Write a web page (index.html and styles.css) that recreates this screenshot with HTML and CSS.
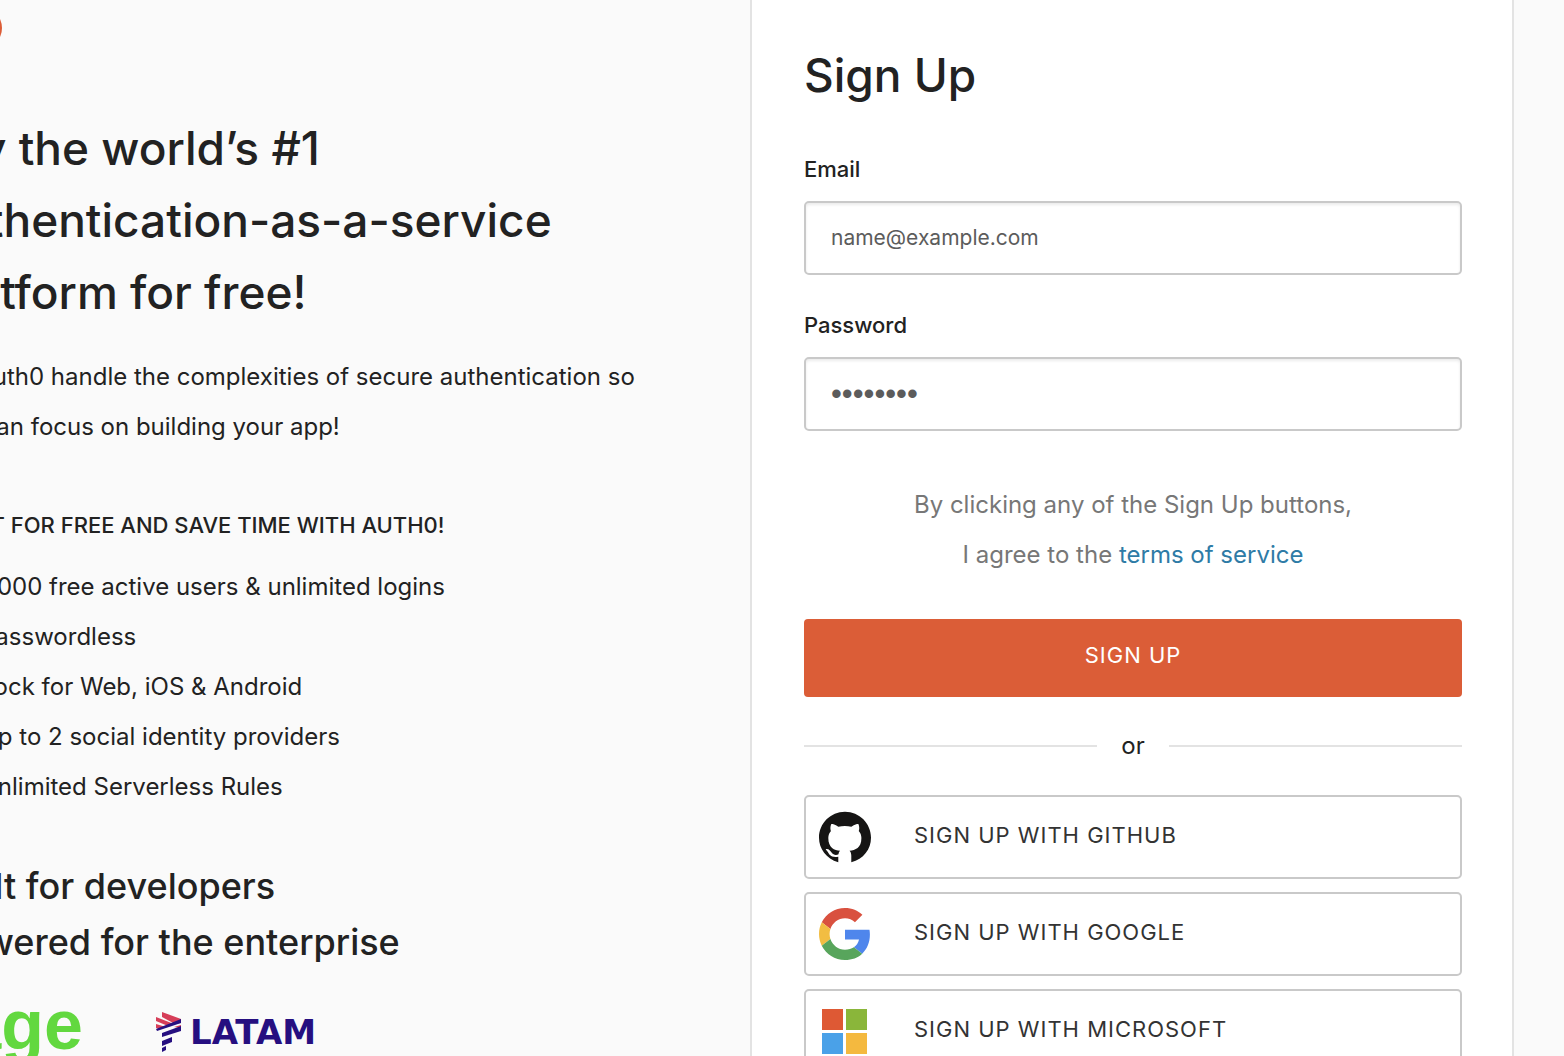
FILE: index.html
```html
<!DOCTYPE html>
<html lang="en">
<head>
  <meta charset="utf-8">
  <meta name="viewport" content="width=device-width, initial-scale=1">
  <title>Sign Up - Auth0</title>
  <link rel="stylesheet" href="styles.css">
</head>
<body>
  <div class="page">
    <main class="intro">
      <header class="brand">
        <svg class="brand-mark" viewBox="0 0 42 42" aria-hidden="true"><circle cx="21" cy="21" r="21" fill="#dc5c36"/></svg>
      </header>
      <h1 class="headline">Try the world’s #1<br>authentication-as-a-service<br>platform for free!</h1>
      <p class="lead">Let Auth0 handle the complexities of secure authentication so<br>you can focus on building your app!</p>
      <h2 class="overline">START FOR FREE AND SAVE TIME WITH AUTH0!</h2>
      <ul class="features">
        <li>7,000 free active users &amp; unlimited logins</li>
        <li>Passwordless</li>
        <li>Lock for Web, iOS &amp; Android</li>
        <li>Up to 2 social identity providers</li>
        <li>Unlimited Serverless Rules</li>
      </ul>
      <h2 class="tagline">Built for developers<br>Powered for the enterprise</h2>
      <div class="customers">
        <svg class="logo-sage" viewBox="0 0 144 60" role="img" aria-label="Sage">
          <text class="sage-word" x="149" y="42" text-anchor="end">sage</text>
        </svg>
        <svg class="logo-latam" viewBox="0 0 170 44" role="img" aria-label="LATAM">
          <g fill="#d63e58">
            <path d="M6 0 25 7V11L19 12 6 5Z"/>
            <path d="M0 5 18 12 12 14 0 9Z"/>
            <path d="M0 12 10 15 4 17 0 16Z"/>
            <path d="M18 15 25 13V16Z"/>
          </g>
          <g fill="#260f80">
            <path d="M0 17 25 7V11L1 19Z"/>
            <path d="M6 21 25 14V19L6 25Z"/>
            <path d="M6 29 16 25V30L6 34Z"/>
            <path d="M6 36 10 34V38L6 40Z"/>
          </g>
          <text class="latam-word" x="34" y="32">LATAM</text>
        </svg>
      </div>
    </main>

    <section class="panel" aria-labelledby="signup-title">
      <h2 class="panel-title" id="signup-title">Sign Up</h2>
      <form class="form">
        <div class="field">
          <label for="email">Email</label>
          <input id="email" type="email" placeholder="name@example.com">
        </div>
        <div class="field">
          <label for="password">Password</label>
          <input id="password" class="password" type="password" placeholder="••••••••">
        </div>
        <p class="terms">By clicking any of the Sign Up buttons,<br>I agree to the <a href="#terms">terms of service</a></p>
        <button class="submit" type="submit">SIGN UP</button>
      </form>
      <div class="divider"><span>or</span></div>
      <div class="social">
        <button class="social-button" type="button">
          <svg class="social-icon" viewBox="0 0 24 24" aria-hidden="true"><path fill="#161514" d="M12 .297c-6.63 0-12 5.373-12 12 0 5 3.3 9.6 8.9 11.4V21.1c-3.6.6-4.3-1.3-4.9-2.3-.3-.5-.9-1-.9-1.25 1.4-.35 2.1.8 2.6 1.5 1 1.5 2.4 1.35 3.3.95.108-.776.417-1.305.76-1.605-2.665-.3-5.466-1.332-5.466-5.93 0-1.31.465-2.38 1.235-3.22-.135-.303-.54-1.523.105-3.176 0 0 1.005-.322 3.3 1.23.96-.267 1.98-.399 3-.405 1.02.006 2.04.138 3 .405 2.28-1.552 3.285-1.23 3.285-1.23.645 1.653.24 2.873.12 3.176.765.84 1.23 1.91 1.23 3.22 0 4.61-2.805 5.625-5.475 5.92.42.36.81 1.096.81 2.22V23.7C20.565 22.092 24 17.592 24 12.297c0-6.627-5.373-12-12-12"/></svg>
          <span>SIGN UP WITH GITHUB</span>
        </button>
        <button class="social-button" type="button">
          <svg class="social-icon" viewBox="0 0 48 48" aria-hidden="true">
            <path fill="#d9513f" d="M24 9.5c3.54 0 6.71 1.22 9.21 3.6l6.85-6.85C35.9 2.38 30.47 0 24 0 14.62 0 6.51 5.38 2.56 13.22l7.98 6.19C12.43 13.72 17.74 9.5 24 9.5z"/>
            <path fill="#4f86ec" d="M46.98 24.55c0-1.57-.15-3.09-.38-4.55H24v9.02h12.94c-.58 2.96-2.26 5.48-4.78 7.18l7.73 6c4.51-4.18 7.09-10.36 7.09-17.65z"/>
            <path fill="#f2bd42" d="M10.53 28.59c-.48-1.45-.76-2.99-.76-4.59s.27-3.14.76-4.59l-7.98-6.19C.92 16.46 0 20.12 0 24s.92 7.54 2.56 10.78l7.97-6.19z"/>
            <path fill="#58a55c" d="M24 48c6.48 0 11.93-2.13 15.89-5.81l-7.73-6c-2.15 1.45-4.92 2.3-8.16 2.3-6.26 0-11.57-4.22-13.47-9.91l-7.98 6.19C6.51 42.62 14.62 48 24 48z"/>
          </svg>
          <span>SIGN UP WITH GOOGLE</span>
        </button>
        <button class="social-button" type="button">
          <svg class="social-icon" viewBox="0 0 52 52" aria-hidden="true">
            <path fill="#de5934" d="M3 4h21v21H3z"/>
            <path fill="#8ab63a" d="M27 4h21v21H27z"/>
            <path fill="#4aa1e8" d="M3 28h21v21H3z"/>
            <path fill="#f4b93f" d="M27 28h21v21H27z"/>
          </svg>
          <span>SIGN UP WITH MICROSOFT</span>
        </button>
      </div>
    </section>
  </div>
</body>
</html>
```
FILE: styles.css
```css
* {
  box-sizing: border-box;
}

body {
  margin: 0;
  background: #fafafa;
  color: #222;
  font-family: Inter, "Liberation Sans", sans-serif;
  font-size: 24px;
  line-height: 50px;
}

h1,
h2,
p,
ul {
  margin: 0;
  padding: 0;
}

input,
button {
  font: inherit;
}

.page {
  display: grid;
  grid-template-columns: minmax(0, 375fr) minmax(0, 382fr);
  height: 100vh;
  padding-right: 50px;
  overflow: hidden;
}

/* Left column, bleeding past the window's left edge */
.intro {
  margin-left: -66px;
  padding-top: 7px;
  white-space: nowrap;
}

.brand {
  display: flex;
  height: 105px;
  padding-left: 26px;
}

.brand-mark {
  width: 42px;
  height: 42px;
}

.headline {
  font-size: 46px;
  font-weight: 500;
  line-height: 72px;
}

.lead {
  margin-top: 24px;
}

.overline {
  margin-top: 48px;
  font-size: 22px;
  font-weight: 500;
}

.features {
  margin-top: 12px;
  padding-left: 46px;
  list-style: none;
}

.tagline {
  margin-top: 46px;
  padding-left: 6px;
  font-size: 36px;
  font-weight: 500;
  line-height: 56px;
}

.customers {
  display: flex;
  align-items: flex-start;
  gap: 78px;
  margin-top: 37px;
}

.logo-sage {
  width: 144px;
  height: 60px;
  overflow: visible;
}

.sage-word {
  fill: #62d83f;
  font: 700 70px "Liberation Sans", sans-serif;
}

.logo-latam {
  width: 170px;
  height: 44px;
  margin-top: 5px;
  overflow: visible;
}

.latam-word {
  fill: #260f80;
  font: 700 34px "DejaVu Sans", sans-serif;
}

/* Sign-up panel */
.panel {
  padding: 39px 50px 50px 52px;
  border: solid #e3e3e3;
  border-width: 0 2px;
  background: #fff;
}

.panel-title {
  font-size: 46px;
  font-weight: 500;
  line-height: 72px;
}

.form {
  margin-top: 42px;
}

.field {
  display: flex;
  flex-direction: column;
  gap: 16px;
  margin-bottom: 34px;
}

.field label {
  font-size: 22px;
  font-weight: 500;
  line-height: 32px;
}

.field input {
  width: 100%;
  height: 74px;
  padding: 0 25px 2px;
  border: 2px solid #c9c9c9;
  border-radius: 5px;
  background: #fff;
  box-shadow: inset 0 2px 3px rgba(0, 0, 0, 0.08);
  color: #222;
  font-size: 21px;
}

.field input::placeholder {
  color: #5c5c5c;
  opacity: 1;
}

.field .password {
  padding-bottom: 0;
  font-family: "Liberation Sans", sans-serif;
  font-size: 31px;
}

.terms {
  margin-top: 49px;
  color: #777;
  text-align: center;
}

.terms a {
  color: #2e7ba6;
  text-decoration: none;
}

.submit {
  width: 100%;
  height: 78px;
  margin-top: 39px;
  padding: 0 0 6px;
  border: 0;
  border-radius: 4px;
  background: #db5d37;
  color: #fff;
  font-size: 22px;
  letter-spacing: 1px;
}

.divider {
  display: flex;
  align-items: center;
  gap: 24px;
  margin-top: 24px;
}

.divider::before,
.divider::after {
  content: "";
  flex: 1;
  height: 2px;
  background: #e3e3e3;
}

.social {
  display: flex;
  flex-direction: column;
  gap: 13px;
  margin-top: 24px;
}

.social-button {
  display: flex;
  align-items: center;
  gap: 43px;
  width: 100%;
  height: 84px;
  padding: 0 13px;
  border: 2px solid #c9c9c9;
  border-radius: 5px;
  background: #fff;
  color: #333;
  font-size: 22px;
  letter-spacing: 1px;
}

.social-button span {
  padding-bottom: 4px;
}

.social-icon {
  width: 52px;
  height: 52px;
}
```
